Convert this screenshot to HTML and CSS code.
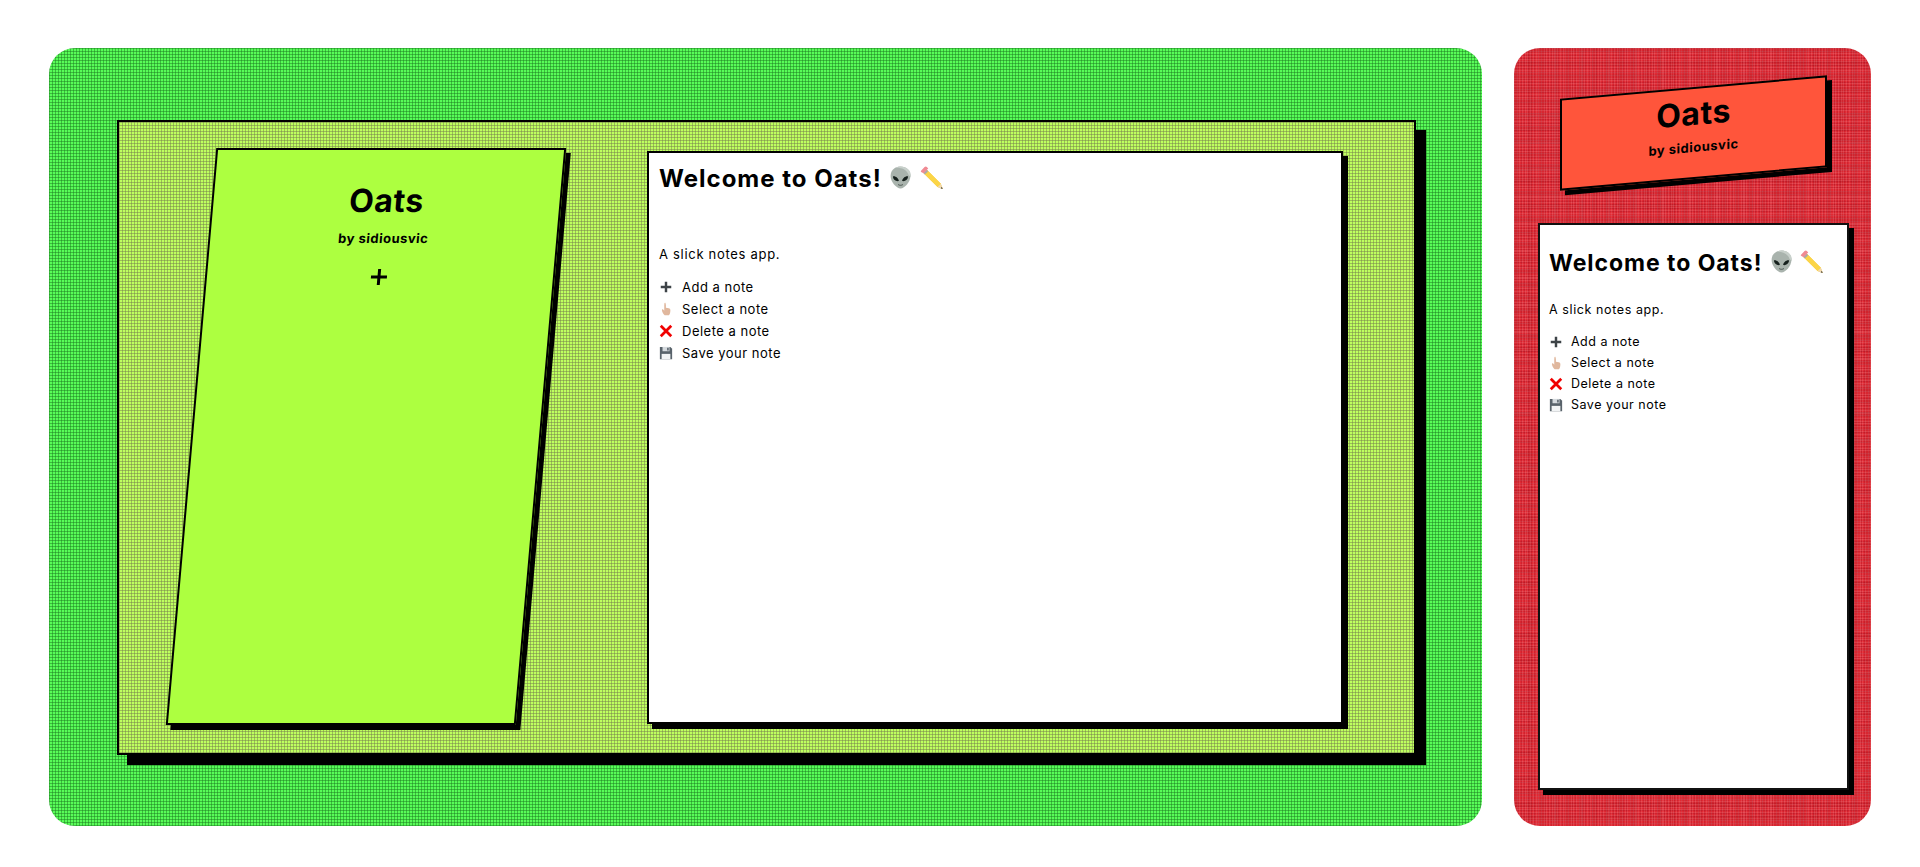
FILE: index.html
```html
<!DOCTYPE html>
<html lang="en">
<head>
<meta charset="utf-8">
<title>Oats</title>
<link rel="stylesheet" href="styles.css">
</head>
<body>
<main class="stage">
  <section class="desk">
    <div class="board">
      <aside class="sidebar">
        <h1 class="brand">Oats</h1>
        <p class="byline">by sidiousvic</p>
        <svg class="add" viewBox="0 0 18 18"><path d="M9 1v16M1 9h16" stroke="#000" stroke-width="3" fill="none"/></svg>
      </aside>
      <article class="note">
        <h2 class="title">Welcome to Oats! <svg class="emoji" viewBox="0 0 24 24"><use href="#alien"/></svg> <svg class="emoji" viewBox="0 0 24 24"><use href="#pencil"/></svg></h2>
        <p class="lead">A slick notes app.</p>
        <ul class="tips">
          <li><svg class="tip-icon" viewBox="0 0 16 16"><use href="#plus"/></svg>Add a note</li>
          <li><svg class="tip-icon" viewBox="0 0 16 16"><use href="#hand"/></svg>Select a note</li>
          <li><svg class="tip-icon" viewBox="0 0 16 16"><use href="#cross"/></svg>Delete a note</li>
          <li><svg class="tip-icon" viewBox="0 0 16 16"><use href="#floppy"/></svg>Save your note</li>
        </ul>
      </article>
    </div>
  </section>
  <section class="phone">
    <header class="banner">
      <h1 class="brand">Oats</h1>
      <p class="byline">by sidiousvic</p>
    </header>
    <article class="note note-small">
      <h2 class="title">Welcome to Oats! <svg class="emoji" viewBox="0 0 24 24"><use href="#alien"/></svg> <svg class="emoji" viewBox="0 0 24 24"><use href="#pencil"/></svg></h2>
      <p class="lead">A slick notes app.</p>
      <ul class="tips">
        <li><svg class="tip-icon" viewBox="0 0 16 16"><use href="#plus"/></svg>Add a note</li>
        <li><svg class="tip-icon" viewBox="0 0 16 16"><use href="#hand"/></svg>Select a note</li>
        <li><svg class="tip-icon" viewBox="0 0 16 16"><use href="#cross"/></svg>Delete a note</li>
        <li><svg class="tip-icon" viewBox="0 0 16 16"><use href="#floppy"/></svg>Save your note</li>
      </ul>
    </article>
  </section>
</main>
<svg class="defs" width="0" height="0">
  <defs>
    <g id="alien">
      <path d="M12 1.5c-5.6 0-9.5 3.8-9.5 9 0 5.600 5.500 12 9.500 12s9.500-6.400 9.500-12c0-5.200-3.900-9-9.500-9z" fill="#a9b3ad"/>
      <path d="M12 1.500c-2 0-3.800.5-5.300 1.400 4-.8 11 .6 13 6.600 1 .8 1.700 1.400 2.200 2.200 0-.5.100-.5.100-1.200 0-5.200-3.900-9-10-9z" fill="#c8d0cb"/>
      <path d="M4.800 10.800c2.600-.4 5.400 1.800 5.600 4.600-2.900.6-5.800-1.600-5.600-4.600zM19.200 10.800c-2.600-.4-5.400 1.800-5.600 4.600 2.900.6 5.800-1.600 5.600-4.600z" fill="#16201d"/>
      <path d="M9.700 18.800c1.500.9 3.100.9 4.600 0" stroke="#39433f" stroke-width=".8" fill="none"/>
    </g>
    <g id="pencil">
      <path d="M6.500 4.500 20 18l1.800 5-5-1.800L3.300 7.700z" fill="#f7c52c"/>
      <path d="M6.500 4.500 20 18l-3 3.200L3.300 7.700z" fill="#fbd547"/>
      <path d="M3.300 7.700 6.500 4.500l1.400 1.400-3.200 3.200z" fill="#a9a9a9"/>
      <path d="M1 5.400 4.400 2c.7-.7 1.500-.7 2.200 0l1.300 1.300-4.500 4.500L1 6.600c-.3-.4-.3-.9 0-1.200z" fill="#f08a93"/>
      <path d="M20 18l1.800 5-5-1.800z" fill="#f1d9b0"/>
      <path d="M21 21l.8 2-2-.8z" fill="#333"/>
    </g>
    <g id="plus"><path d="M8 2v12M2 8h12" stroke="#3d4347" stroke-width="2.800" fill="none"/></g>
    <g id="hand">
      <path d="M6 1.500c0-1 1.900-1 1.900 0v5l3.300.7c1.300.3 1.800 1 1.800 2.300 0 2.700-.7 5-1.700 5.500H6.500C5 14 3.500 11.300 3.300 9.200c0-1 .9-1.200 1.500-.5l1.200 1.200z" fill="#e0b79d"/>
      <path d="M6.400 1.400c0-.4.900-.4 1 0v1.500h-1z" fill="#f3e0d2"/>
    </g>
    <g id="cross"><path d="M2 2l12 12M14 2 2 14" stroke="#f00000" stroke-width="3.200" fill="none"/></g>
    <g id="floppy">
      <path d="M1 1h12l2 2v12H1z" fill="#59636b"/>
      <path d="M4 1h8v5H4z" fill="#d5dade"/>
      <path d="M9.300 2h1.800v3H9.300z" fill="#59636b"/>
      <path d="M3 9h10v6H3z" fill="#f2f4f5"/>
    </g>
  </defs>
</svg>
</body>
</html>
```
FILE: styles.css
```css
* { box-sizing: border-box; }
html, body { margin: 0; height: 100%; background: #fff; overflow: hidden; }
body { font-family: "Inter", "Liberation Sans", sans-serif; color: #000; }
.defs { position: absolute; }
.stage { display: flex; gap: 32px; height: 867px; padding: 48px 49px 41px; }
.desk {
  width: 1433px; border-radius: 26px; padding: 72px 66px 72px 68px;
  background-color: #58fc58;
  background-image: linear-gradient(rgba(30,124,34,.5) 1px, transparent 1px), linear-gradient(90deg, rgba(30,124,34,.5) 1px, transparent 1px);
  background-size: 3px 3px;
}
.board {
  display: flex; height: 635px; border: 2px solid #000; box-shadow: 10px 10px 0 #000;
  background-color: #beff5f; padding: 26px 60px 30px 72px; gap: 106px;
  background-image: linear-gradient(rgba(118,127,78,.5) 1px, transparent 1px), linear-gradient(90deg, rgba(118,127,78,.5) 1px, transparent 1px);
  background-size: 3px 3px;
}
.sidebar {
  flex: 0 0 350px; height: 577px; background: #adff40; border: 2px solid #000; box-shadow: 5px 5px 0 #000;
  transform: skewX(-5deg); text-align: center; padding-top: 31px;
  display: flex; flex-direction: column; align-items: center;
}
.brand { margin: 0; font-size: 32px; line-height: 40px; font-weight: 700; letter-spacing: .5px; }
.byline { margin: 9px 0 0; font-size: 13px; line-height: 16px; font-weight: 700; letter-spacing: .5px; }
.add { width: 18px; height: 18px; margin-top: 22px; margin-left: -2px; }
.note { background: #fff; border: 2px solid #000; box-shadow: 5px 5px 0 #000; padding: 11px 10px; flex: 0 0 696px; height: 573px; margin-top: 3px; }
.title { margin: 0; font-size: 24px; line-height: 30px; font-weight: 700; letter-spacing: 1px; white-space: nowrap; }
.emoji { width: 25px; height: 25px; vertical-align: -3px; }
.lead { margin: 50px 0 0; font-size: 13px; line-height: 20px; letter-spacing: .7px; }
.tips { list-style: none; margin: 12px 0 0; padding: 0; font-size: 13px; line-height: 22px; letter-spacing: .5px; }
.tips li { display: flex; align-items: center; gap: 9px; }
.tip-icon { width: 14px; height: 14px; }
.phone {
  width: 357px; border-radius: 26px; padding: 39px 25px 37px; display: flex; flex-direction: column; align-items: center;
  background-color: #e02a34;
  background-image:
    repeating-linear-gradient(rgba(255,255,255,.09) 0 1px, transparent 1px 2.7px),
    repeating-linear-gradient(90deg, rgba(255,255,255,.09) 0 1px, transparent 1px 2.7px),
    repeating-linear-gradient(rgba(140,0,20,.18) 0 1px, transparent 1px 3.4px),
    repeating-linear-gradient(90deg, rgba(140,0,20,.18) 0 1px, transparent 1px 3.4px),
    repeating-linear-gradient(rgba(120,0,10,.08) 0 5px, transparent 5px 13px),
    repeating-linear-gradient(90deg, rgba(120,0,10,.08) 0 5px, transparent 5px 13px);
}
.banner {
  flex: 0 0 auto; width: 267px; height: 92px; margin-left: 1px; background: #ff553b; border: 2px solid #000; box-shadow: 5px 5px 0 #000;
  transform: skewY(-5deg); text-align: center; padding-top: 5px;
}
.banner .byline { margin-top: 5px; }
.note-small { flex: 0 0 auto; width: 311px; height: 567px; margin: 44px 0 0 2px; padding: 23px 9px; border-color: #111; }
.note-small .title { font-size: 23px; line-height: 30px; letter-spacing: .95px; }
.note-small .lead { margin-top: 22px; font-size: 12.500px; letter-spacing: .6px; }
.note-small .tips { margin-top: 11px; font-size: 12.500px; line-height: 21px; }
.note-small .tips li { gap: 8px; }
```
